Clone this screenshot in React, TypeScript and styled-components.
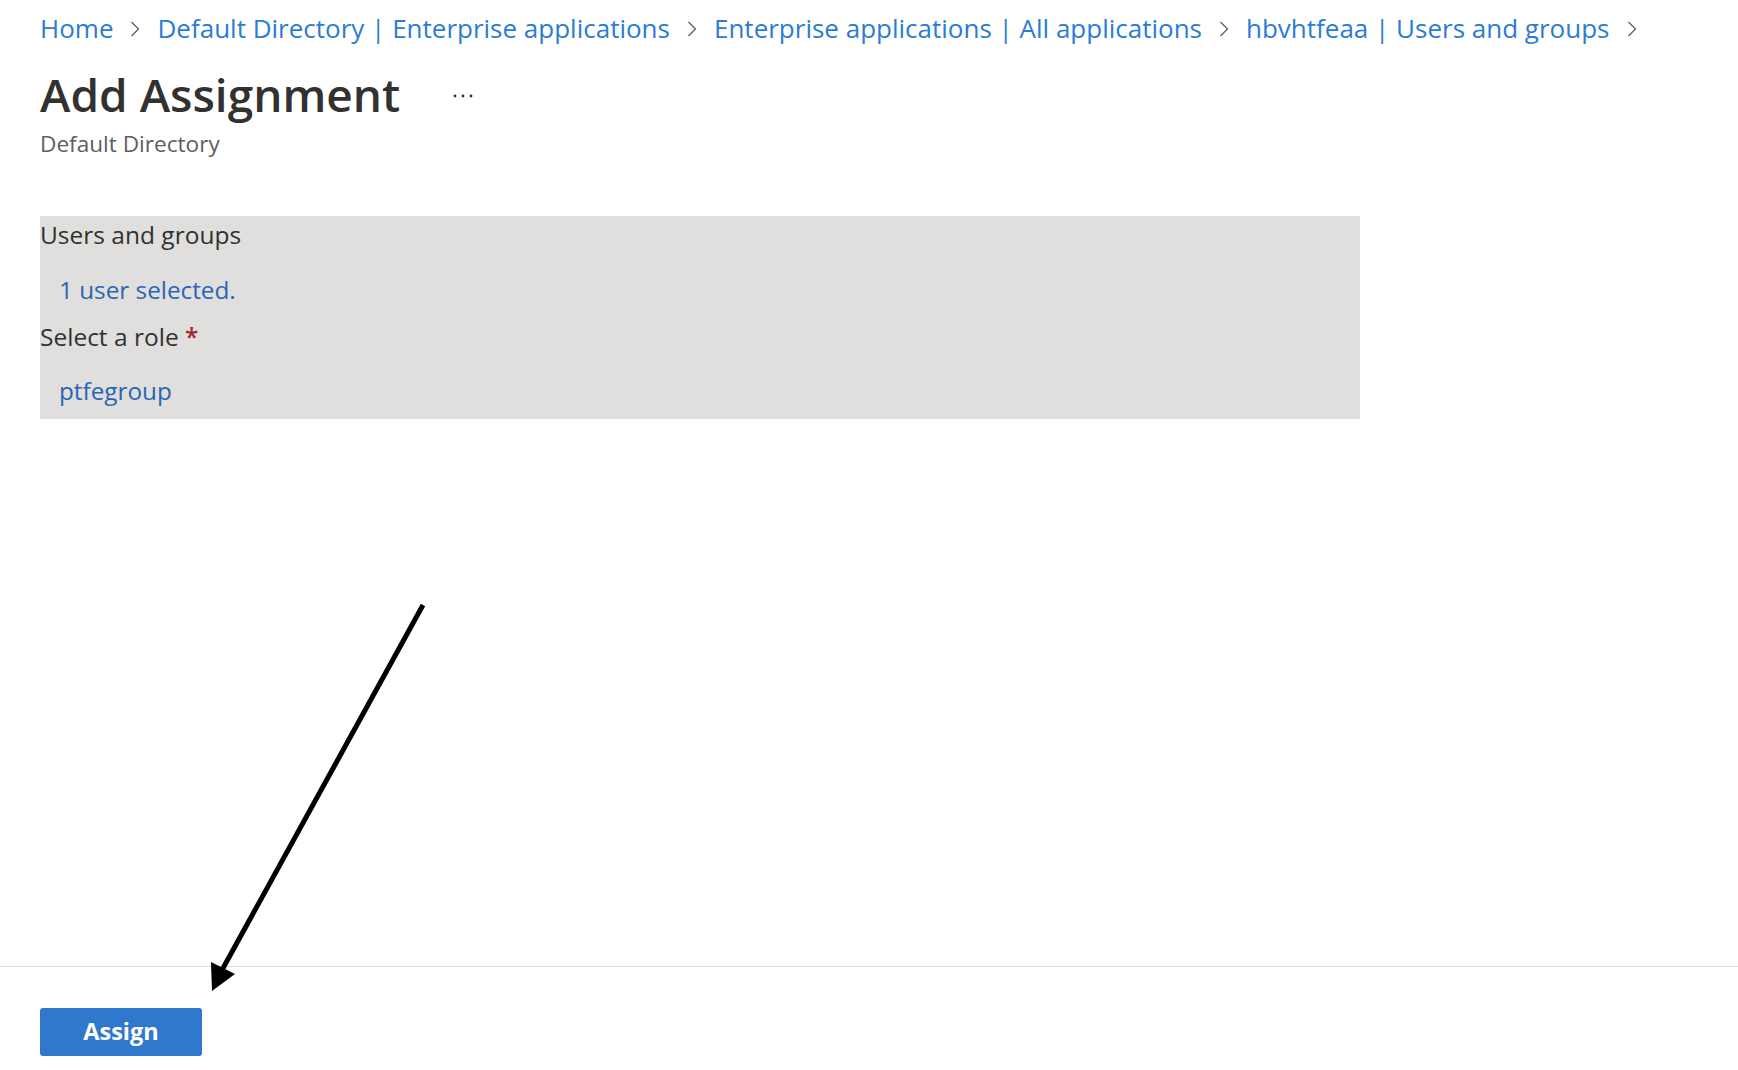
import React from 'react'
import styled, { createGlobalStyle } from 'styled-components'

const GlobalStyle = createGlobalStyle`
  html, body {
    margin: 0;
    padding: 0;
    background: #ffffff;
  }
  body {
    font-family: 'Open Sans', 'Noto Sans', sans-serif;
    color: #323130;
  }
`

const crumbs = [
  'Home',
  'Default Directory | Enterprise applications',
  'Enterprise applications | All applications',
  'hbvhtfeaa | Users and groups',
]

const Chevron = () => (
  <svg width="12" height="16" viewBox="0 0 12 16" aria-hidden="true">
    <path d="M2.5 1 L9.5 8 L2.5 15" fill="none" stroke="#605e5c" strokeWidth="1.3" />
  </svg>
)

const MoreIcon = () => (
  <svg width="20" height="6" viewBox="0 0 20 6" aria-hidden="true">
    <circle cx="2" cy="3" r="1.4" fill="#323130" />
    <circle cx="10" cy="3" r="1.4" fill="#323130" />
    <circle cx="18" cy="3" r="1.4" fill="#323130" />
  </svg>
)

// annotation arrow drawn over the page
const Arrow = () => (
  <ArrowLayer width="1738" height="1070" viewBox="0 0 1738 1070" aria-hidden="true">
    <line x1="423" y1="605" x2="222" y2="970" stroke="#000" strokeWidth="5" />
    <polygon points="212,991 211,962 235,974" fill="#000" />
  </ArrowLayer>
)

const App: React.FC = () => {
  return (
    <>
      <GlobalStyle />
      <Page>
        <Main>
          <Breadcrumb>
            {crumbs.map((c) => (
              <React.Fragment key={c}>
                <CrumbLink>{c}</CrumbLink>
                <Sep>
                  <Chevron />
                </Sep>
              </React.Fragment>
            ))}
          </Breadcrumb>
          <TitleRow>
            <Title>Add Assignment</Title>
            <MoreButton>
              <MoreIcon />
            </MoreButton>
          </TitleRow>
          <Subtitle>Default Directory</Subtitle>

          <Panel>
            <FieldLabel>Users and groups</FieldLabel>
            <FieldValue $gap={25}>1 user selected.</FieldValue>
            <FieldLabel $gap={17}>
              Select a role <Required>*</Required>
            </FieldLabel>
            <FieldValue $gap={24}>ptfegroup</FieldValue>
          </Panel>
        </Main>
        <Footer>
          <PrimaryButton>Assign</PrimaryButton>
        </Footer>
        <Arrow />
      </Page>
    </>
  )
}

const Page = styled.div`
  position: relative;
  min-height: 100vh;
  display: flex;
  flex-direction: column;
`

const Main = styled.div`
  flex: 1;
  padding: 12px 40px 0;
`

const Breadcrumb = styled.nav`
  display: flex;
  align-items: center;
  height: 32px;
  white-space: nowrap;
`

const CrumbLink = styled.a`
  font-size: 26px;
  line-height: 32px;
  color: #2b7cd3;
  text-decoration: none;
  cursor: pointer;
`

const Sep = styled.span`
  display: flex;
  align-items: center;
  margin: 2px 16px 0 16px;
`

const TitleRow = styled.div`
  display: flex;
  align-items: center;
  margin-top: 22px;
`

const Title = styled.h1`
  margin: 0;
  font-size: 46px;
  line-height: 56px;
  font-weight: 600;
  color: #323130;
`

const MoreButton = styled.button`
  display: flex;
  align-items: center;
  background: transparent;
  border: none;
  padding: 0;
  margin: 4px 0 0 53px;
  cursor: pointer;
`

const Subtitle = styled.div`
  margin-top: 8px;
  font-size: 22.6px;
  line-height: 28px;
  color: #605e5c;
`

const Panel = styled.section`
  margin-top: 58px;
  width: 1320px;
  box-sizing: border-box;
  padding: 4px 0 13px;
  background: #e0dfdd;
`

const FieldLabel = styled.div<{ $gap?: number }>`
  margin-top: ${(p) => p.$gap ?? 0}px;
  font-size: 24.5px;
  line-height: 30px;
  color: #323130;
`

const Required = styled.span`
  color: #a4262c;
  font-weight: 600;
`

const FieldValue = styled.div<{ $gap?: number }>`
  margin-top: ${(p) => p.$gap ?? 0}px;
  padding-left: 19px;
  font-size: 24.3px;
  line-height: 30px;
  color: #2866b4;
`

const Footer = styled.footer`
  border-top: 1px solid #dcdcdc;
  padding: 41px 40px 14px;
`

const PrimaryButton = styled.button`
  width: 162px;
  height: 48px;
  border: none;
  border-radius: 3px;
  background: #2f78ce;
  color: #ffffff;
  font-family: 'Open Sans', 'Noto Sans', sans-serif;
  font-size: 23.5px;
  font-weight: 700;
  padding: 0 0 3px;
  cursor: pointer;
`

const ArrowLayer = styled.svg`
  position: absolute;
  left: 0;
  top: 0;
  pointer-events: none;
`

export default App
